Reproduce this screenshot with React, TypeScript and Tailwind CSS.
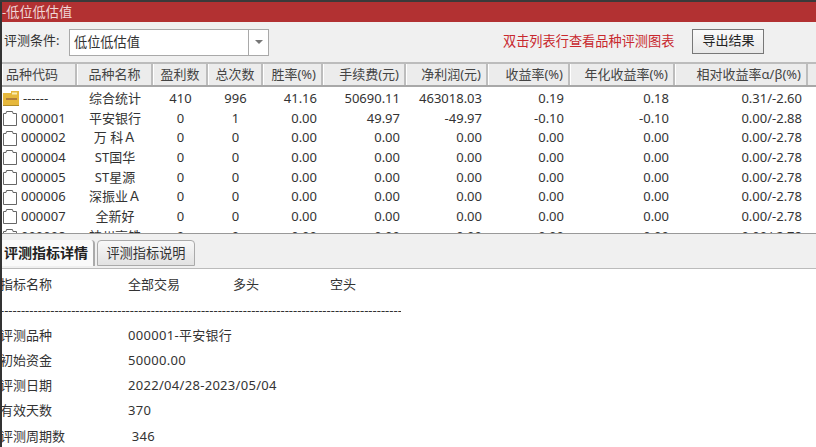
import React from "react"

const gridCols = "grid grid-cols-[75px_76px_55px_55px_60px_83px_82px_82px_105px_133px_1fr]"

const headers = ["品种代码", "品种名称", "盈利数", "总次数", "胜率(%)", "手续费(元)", "净利润(元)", "收益率(%)", "年化收益率(%)", "相对收益率α/β(%)"]

const rows = [
  ["------", "综合统计", "410", "996", "41.16", "50690.11", "463018.03", "0.19", "0.18", "0.31/-2.60"],
  ["000001", "平安银行", "0", "1", "0.00", "49.97", "-49.97", "-0.10", "-0.10", "0.00/-2.88"],
  ["000002", "万 科Ａ", "0", "0", "0.00", "0.00", "0.00", "0.00", "0.00", "0.00/-2.78"],
  ["000004", "ST国华", "0", "0", "0.00", "0.00", "0.00", "0.00", "0.00", "0.00/-2.78"],
  ["000005", "ST星源", "0", "0", "0.00", "0.00", "0.00", "0.00", "0.00", "0.00/-2.78"],
  ["000006", "深振业Ａ", "0", "0", "0.00", "0.00", "0.00", "0.00", "0.00", "0.00/-2.78"],
  ["000007", "全新好", "0", "0", "0.00", "0.00", "0.00", "0.00", "0.00", "0.00/-2.78"],
  ["000008", "神州高铁", "0", "0", "0.00", "0.00", "0.00", "0.00", "0.00", "0.00/-2.78"],
]

const details = [
  ["评测品种", "000001-平安银行"],
  ["初始资金", "50000.00"],
  ["评测日期", "2022/04/28-2023/05/04"],
  ["有效天数", "370"],
  ["评测周期数", " 346"],
]

function RowIcon({ summary }: { summary: boolean }) {
  if (summary) {
    return (
      <svg width="16" height="15" viewBox="0 0 16 15" className="shrink-0">
        <path d="M0 2h8V0h8v15H0z" fill="#e6b83c" />
        <path d="M9 2.500h5" stroke="#fbeeb0" strokeWidth="2" />
        <path d="M3 8h11" stroke="#9c6a3a" strokeWidth="1.500" />
        <path d="M0 14.500h16" stroke="#b08c28" />
      </svg>
    )
  }
  return (
    <svg width="14" height="15" viewBox="0 0 14 15" className="shrink-0">
      <path d="M0.500 2.500h2.500l0.500-2h6l0.500 2h3.500v12h-13z" fill="#fff" stroke="#666" />
    </svg>
  )
}

export default function App() {
  return (
    <div className="flex flex-col h-[447px] w-[816px] overflow-hidden bg-white font-['Noto_Sans','Noto_Sans_CJK_SC',sans-serif] text-[13px] text-[#333]">
      <div className="h-[2px] bg-[#3a3a3a] shrink-0" />
      <div className="flex flex-1 min-h-0">
        <div className="w-[2px] bg-[#333] shrink-0" />
        <div className="flex flex-col flex-1 min-w-0 overflow-hidden">
          {/* Title */}
          <div className="h-[20px] bg-[#b23132] text-[#f0d6d6] text-[13.200px] leading-[20px] shrink-0">-低位低估值</div>

          {/* Toolbar */}
          <div className="h-[40px] bg-[#f0f0f0] flex items-center pl-[2px] shrink-0">
            <span className="w-[65px] -mt-[3px]">评测条件:</span>
            <div className="w-[200px] h-[27px] flex border border-[#a9a9a9] bg-white">
              <span className="flex-1 pl-[4px] text-[13.200px] leading-[25px]">低位低估值</span>
              <div className="w-[20px] border-l border-[#a9a9a9] flex items-center justify-center">
                <span className="w-0 h-0 border-x-[4px] border-x-transparent border-t-[4px] border-t-[#777]" />
              </div>
            </div>
            <span className="ml-[234px] text-[#c8282e] text-[13.200px]">双击列表行查看品种评测图表</span>
            <button className="ml-[18px] -mt-[2px] w-[72px] h-[25px] border border-[#777] bg-gradient-to-b from-[#fafafa] to-[#e8e8e8] text-[13px] text-[#222]">导出结果</button>
          </div>

          {/* Table header */}
          <div className={`${gridCols} h-[25px] bg-[#ececec] shrink-0 border-t-2 border-b-2 border-t-[#bcbcbc] border-b-[#a8a8a8]`}>
            {headers.map((h, i) => (
              <div
                key={h}
                className={`border-r-2 border-[#bdbdbd] border-l border-l-white leading-[21px] text-[#444] ${i === 0 ? "pl-[3px]" : i < 4 ? "text-center" : "text-right pr-[5px]"}`}
              >
                {h}
              </div>
            ))}
            <div />
          </div>

          {/* Table body */}
          <div className="h-[146px] overflow-hidden shrink-0 pt-[2px]">
            {rows.map((r, idx) => (
              <div key={r[0]} className={`${gridCols} h-[19.700px] leading-[19.700px]`}>
                {r.map((c, i) => (
                  <div
                    key={i}
                    className={
                      i === 0
                        ? "flex items-center gap-[4px] pl-[1px]"
                        : i < 4
                          ? "text-center"
                          : "text-right pr-[6px]"
                    }
                  >
                    {i === 0 && <RowIcon summary={idx === 0} />}
                    {c}
                  </div>
                ))}
              </div>
            ))}
          </div>

          {/* Tabs */}
          <div className="h-[36px] bg-[#f0f0f0] border-t border-[#999] border-b border-b-[#bbb] flex items-end pb-[2px] shrink-0">
            <div className="w-[93px] h-[26px] bg-[#fafafa] font-bold text-[14px] text-[#222] leading-[25px] pl-[2px] rounded-tr-[4px] border-r-2 border-[#aaa]">评测指标详情</div>
            <div className="ml-[2px] w-[98px] h-[26px] bg-gradient-to-b from-[#f8f8f8] to-[#e2e2e2] border border-[#aaa] rounded-t-[4px] text-center text-[13.200px] leading-[25px]">评测指标说明</div>
          </div>

          {/* Details */}
          <div className="-ml-[2px] pt-[3px] leading-[25.300px]">
            <div className="flex">
              <span className="w-[128px]">指标名称</span>
              <span className="w-[105px]">全部交易</span>
              <span className="w-[97px]">多头</span>
              <span>空头</span>
            </div>
            <div className="w-[401px] overflow-hidden whitespace-nowrap translate-y-[1px]">{"-".repeat(100)}</div>
            {details.map(([k, v]) => (
              <div key={k} className="flex">
                <span className="w-[128px]">{k}</span>
                <span className="whitespace-pre tracking-[0.300px]">{v}</span>
              </div>
            ))}
          </div>
        </div>
      </div>
    </div>
  )
}
